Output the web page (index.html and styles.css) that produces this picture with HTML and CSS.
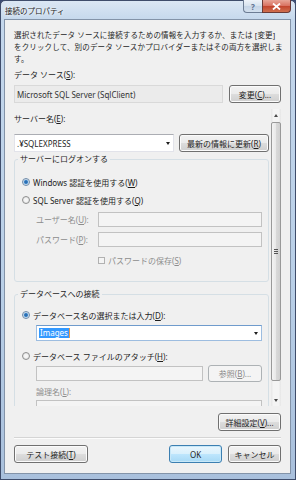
FILE: index.html
```html
<!DOCTYPE html>
<html lang="ja">
<head>
  <meta charset="UTF-8" />
  <title>接続のプロパティ</title>
  <link rel="stylesheet" href="styles.css">
</head>
<body>
  <div class="window">
    <!-- Title bar -->
    <div class="titlebar">
      <span class="title">接続のプロパティ</span>
      <div class="caption">
        <span class="cap-btn cap-help">?</span>
        <span class="cap-btn cap-close">
          <svg width="9" height="7" viewBox="0 0 9 7"><path d="M1 0.5 L8 6.5 M8 0.5 L1 6.5" stroke="#fff" stroke-width="1.8"/></svg>
        </span>
      </div>
    </div>

    <div class="client">
      <p class="desc">選択されたデータ ソースに接続するための情報を入力するか、または [変更]<br>をクリックして、別のデータ ソースかプロバイダーまたはその両方を選択しま<br>す。</p>

      <div class="label">データ ソース(<u>S</u>):</div>
      <div class="row">
        <div class="field readonly source-field">Microsoft SQL Server (SqlClient)</div>
        <button class="btn btn-change">変更(<u>C</u>)...</button>
      </div>

      <!-- Scrolling settings panel -->
      <div class="scroll-panel">
        <div class="scroll-content">
          <div class="label">サーバー名(<u>E</u>):</div>
          <div class="row server-row">
            <div class="field combo server-combo">.¥SQLEXPRESS<span class="arrow"></span></div>
            <button class="btn btn-refresh">最新の情報に更新(<u>R</u>)</button>
          </div>

          <fieldset class="group group-logon">
            <legend>サーバーにログオンする</legend>
            <div class="option opt-win"><span class="radio on"></span>Windows 認証を使用する(<u>W</u>)</div>
            <div class="option opt-sql"><span class="radio"></span>SQL Server 認証を使用する(<u>Q</u>)</div>
            <div class="sub-row user-row">
              <span class="sub-label disabled">ユーザー名(<u>U</u>):</span>
              <div class="field disabled-field"></div>
            </div>
            <div class="sub-row pw-row">
              <span class="sub-label disabled">パスワード(<u>P</u>):</span>
              <div class="field disabled-field"></div>
            </div>
            <div class="check-row disabled"><span class="checkbox"></span>パスワードの保存(<u>S</u>)</div>
          </fieldset>

          <fieldset class="group group-db">
            <legend>データベースへの接続</legend>
            <div class="option opt-dbname"><span class="radio on"></span>データベース名の選択または入力(<u>D</u>):</div>
            <div class="field combo db-combo"><span class="sel">Images</span><span class="arrow"></span></div>
            <div class="option opt-attach"><span class="radio"></span>データベース ファイルのアタッチ(<u>H</u>):</div>
            <div class="attach-row">
              <div class="field disabled-field"></div>
              <button class="btn btn-browse" disabled>参照(<u>B</u>)...</button>
            </div>
            <div class="sub-label logical-label disabled">論理名(<u>L</u>):</div>
            <div class="field disabled-field logical-field"></div>
          </fieldset>
        </div>

        <div class="scrollbar">
          <div class="sb-arrow"><span class="tri-up"></span></div>
          <div class="sb-thumb"><span class="grip"></span></div>
          <div class="sb-track"></div>
          <div class="sb-arrow"><span class="tri-down"></span></div>
        </div>
      </div>

      <div class="advanced-row">
        <button class="btn btn-advanced">詳細設定(<u>V</u>)...</button>
      </div>
      <div class="separator"></div>
      <div class="footer">
        <button class="btn btn-test">テスト接続(<u>T</u>)</button>
        <button class="btn btn-ok">OK</button>
        <button class="btn btn-cancel">キャンセル</button>
      </div>
    </div>
  </div>
</body>
</html>
```

FILE: styles.css
```css
* {
  box-sizing: border-box;
}
body {
  margin: 0;
  background: #3a4a72;
  font-family: "Noto Sans", "Noto Sans CJK JP", sans-serif;
  font-size: 8px;
  color: #1e1e1e;
}
u {
  text-decoration: underline;
  text-underline-offset: 1px;
}
.window {
  width: 296px;
  height: 480px;
  display: flex;
  flex-direction: column;
  padding: 0 4px 5px 3px;
  border: 1px solid #3f4d6b;
  border-radius: 5px 5px 0 0;
  background: linear-gradient(#dbe7f4, #c4d7ec 20px, #b9cfe7 60%, #a9c0dc);
}
/* TITLE BAR */
.titlebar {
  height: 18px;
  display: flex;
  align-items: flex-start;
}
.title {
  padding: 5px 0 0 1px;
  line-height: 10px;
  font-size: 7.5px;
  color: #1a1a1a;
  text-shadow: 0 0 4px #fff, 0 0 2px #fff;
}
.caption {
  margin-left: auto;
  margin-top: -1px;
  display: flex;
}
.cap-btn {
  height: 13px;
  display: flex;
  align-items: center;
  justify-content: center;
}
.cap-help {
  width: 19px;
  border: 1px solid #6d7d94;
  border-top: none;
  border-right: none;
  border-radius: 0 0 0 4px;
  background: linear-gradient(#eef3f9, #d6e2ee 50%, #c4d4e6 50%, #d3e0ee);
  color: #5b7090;
  font-size: 8px;
  font-weight: bold;
}
.cap-close {
  width: 29px;
  border: 1px solid #6b3a36;
  border-top: none;
  border-radius: 0 0 4px 0;
  background: linear-gradient(#e8a597, #d8705f 50%, #c2432c 50%, #d0704f);
}
/* CLIENT AREA */
.client {
  flex: 1;
  background: #f0f0f0;
  border: 1px solid #8393a8;
  padding: 9px 9px 0 9px;
  display: flex;
  flex-direction: column;
}
.desc {
  margin: 0;
  font-size: 7.5px;
  letter-spacing: 0.15px;
  line-height: 12px;
  white-space: nowrap;
}
.label {
  line-height: 12px;
  margin-top: 4px;
  white-space: nowrap;
}
.row {
  display: flex;
  align-items: center;
  justify-content: space-between;
  margin-top: 4px;
  height: 18px;
}
.field {
  height: 15px;
  background: #fff;
  border: 1px solid #e2e3ea;
  border-top-color: #abadb3;
  display: flex;
  align-items: center;
  padding: 0 3px 0 2px;
  white-space: nowrap;
}
.readonly {
  background: #ebebeb;
  border-color: #d9d9d9;
  color: #333;
}
.source-field {
  width: 209px;
  height: 18px;
}
.disabled-field {
  background: #f4f4f4;
  border-color: #c2c2c2;
}
.combo .arrow {
  margin-left: auto;
  border-left: 2.5px solid transparent;
  border-right: 2.5px solid transparent;
  border-top: 3px solid #1e1e1e;
}
/* BUTTONS */
.btn {
  font: inherit;
  color: #1e1e1e;
  height: 18px;
  padding: 0;
  border: 1px solid #707070;
  border-radius: 3px;
  background: linear-gradient(#f2f2f2, #ebebeb 50%, #dddddd 50%, #cfcfcf);
  box-shadow: inset 0 0 0 1px #fbfbfb;
  white-space: nowrap;
}
.btn-change {
  width: 52px;
}
.btn[disabled] {
  border-color: #adb2b5;
  background: #f4f4f4;
  box-shadow: none;
  color: #8a8a8a;
}
.btn-ok {
  border-color: #3c7fb1;
  background: linear-gradient(#eaf6fd, #d9f0fc 50%, #bee6fd 50%, #a7d9f5);
  box-shadow: inset 0 0 0 1px #c8e8f8;
}
/* SCROLL PANEL */
.scroll-panel {
  margin-top: 6px;
  height: 297px;
  display: flex;
  gap: 2px;
}
.scroll-content {
  flex: 1;
  overflow: hidden;
}
.server-row {
  margin-top: 9px;
}
.server-combo {
  width: 160px;
  height: 18px;
}
.btn-refresh {
  width: 90px;
}
.group {
  margin: 1px 0 0 0;
  padding: 0 6px 15px 7px;
  border: 1px solid #d5dfe5;
  border-radius: 3px;
  min-width: 0;
}
.group legend {
  padding: 0 2px;
  margin-left: -4px;
  line-height: 12px;
}
.group-db {
  margin-top: 6px;
  padding-bottom: 40px;
}
.option {
  display: flex;
  align-items: center;
  height: 12px;
  white-space: nowrap;
}
.radio {
  width: 8px;
  height: 8px;
  margin-right: 3px;
  border-radius: 50%;
  border: 1px solid #8e8f8f;
  background: radial-gradient(circle, #f6f6f6 30%, #d8d8d8);
}
.radio.on {
  border-color: #6e8aa8;
  background: radial-gradient(circle, #1f5a9c 0, #3f86c8 1.6px, #bcd6ee 2.4px, #f2f2f2 3.2px);
}
.opt-win {
  margin-top: 11px;
}
.opt-sql {
  margin-top: 6px;
}
.sub-row {
  display: flex;
  align-items: center;
  margin-left: 14px;
}
.sub-row .field {
  flex: 1;
}
.user-row {
  margin-top: 6px;
}
.pw-row {
  margin-top: 5px;
}
.sub-label {
  width: 62px;
  line-height: 12px;
  white-space: nowrap;
}
.disabled {
  color: #8d8d8d;
}
.check-row {
  display: flex;
  align-items: center;
  height: 12px;
  margin: 7px 0 0 76px;
}
.checkbox {
  width: 7px;
  height: 7px;
  margin-right: 3px;
  border: 1px solid #b1b1b1;
  background: #f4f4f4;
}
.opt-dbname {
  margin-top: 9px;
}
.db-combo {
  margin: 4px 0 0 14px;
  height: 16px;
  border-color: #9dbde0;
  border-top-color: #6f9bcc;
}
.db-combo .sel {
  background: #3399ff;
  color: #fff;
  line-height: 10px;
  padding: 0 1px;
  border-right: 1px solid #e89a4a;
}
.opt-attach {
  margin-top: 9px;
}
.attach-row {
  display: flex;
  align-items: center;
  gap: 5px;
  height: 17px;
  margin: 3px 0 0 14px;
}
.attach-row .field {
  flex: 1;
}
.btn-browse {
  width: 54px;
  height: 17px;
}
.logical-label {
  margin: 4px 0 0 14px;
}
.logical-field {
  margin: 2px 0 0 14px;
  height: 16px;
}
/* SCROLLBAR */
.scrollbar {
  width: 10px;
  display: flex;
  flex-direction: column;
  background: linear-gradient(90deg, #e6e6e6, #f4f4f4 25%, #f4f4f4 75%, #e6e6e6);
}
.sb-arrow {
  height: 12px;
  display: flex;
  align-items: center;
  justify-content: center;
}
.tri-up {
  border-left: 2.5px solid transparent;
  border-right: 2.5px solid transparent;
  border-bottom: 3px solid #4a4a4a;
}
.tri-down {
  border-left: 2.5px solid transparent;
  border-right: 2.5px solid transparent;
  border-top: 3px solid #4a4a4a;
}
.sb-thumb {
  margin-top: 1px;
  height: 259px;
  border: 1px solid #999;
  border-radius: 2px;
  background: linear-gradient(90deg, #f3f3f3, #e8e8e8 50%, #d9d9d9 50%, #d0d0d0);
  display: flex;
  align-items: center;
  justify-content: center;
}
.grip {
  width: 4px;
  height: 5px;
  background: repeating-linear-gradient(#555 0 1px, transparent 1px 2px);
}
.sb-track {
  flex: 1;
}
/* BOTTOM BUTTONS */
.advanced-row {
  display: flex;
  justify-content: flex-end;
  margin-top: 7px;
}
.btn-advanced {
  width: 63px;
}
.separator {
  margin-top: 6px;
  border-top: 1px solid #d5d5d5;
  border-bottom: 1px solid #fcfcfc;
}
.footer {
  display: flex;
  gap: 6px;
  margin-top: 6px;
}
.btn-test {
  width: 74px;
  margin-right: auto;
}
.btn-ok,
.btn-cancel {
  width: 53px;
}
```
